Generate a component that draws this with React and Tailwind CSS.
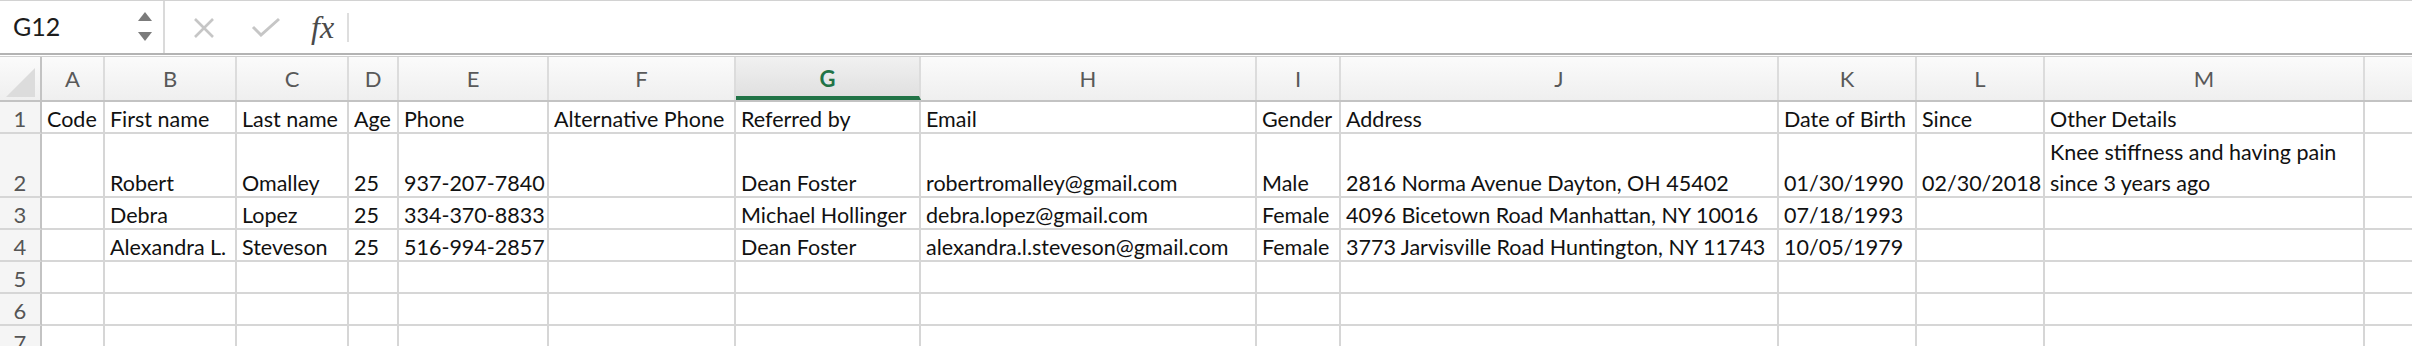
import React from "react";

const cols = [
  { k: "A", w: "w-[63px]" },
  { k: "B", w: "w-[132px]" },
  { k: "C", w: "w-[112px]" },
  { k: "D", w: "w-[50px]" },
  { k: "E", w: "w-[150px]" },
  { k: "F", w: "w-[187px]" },
  { k: "G", w: "w-[185px]" },
  { k: "H", w: "w-[336px]" },
  { k: "I", w: "w-[84px]" },
  { k: "J", w: "w-[438px]" },
  { k: "K", w: "w-[138px]" },
  { k: "L", w: "w-[128px]" },
  { k: "M", w: "w-[320px]" },
];

const rows = [
  { n: 1, h: "h-[32px]", cells: ["Code", "First name", "Last name", "Age", "Phone", "Alternative Phone", "Referred by", "Email", "Gender", "Address", "Date of Birth", "Since", "Other Details"] },
  { n: 2, h: "h-[64px]", cells: ["", "Robert", "Omalley", "25", "937-207-7840", "", "Dean Foster", "robertromalley@gmail.com", "Male", "2816 Norma Avenue Dayton, OH 45402", "01/30/1990", "02/30/2018", ["Knee stiffness and having pain", "since 3 years ago"]] },
  { n: 3, h: "h-[32px]", cells: ["", "Debra", "Lopez", "25", "334-370-8833", "", "Michael Hollinger", "debra.lopez@gmail.com", "Female", "4096 Bicetown Road Manhattan, NY 10016", "07/18/1993", "", ""] },
  { n: 4, h: "h-[32px]", cells: ["", "Alexandra L.", "Steveson", "25", "516-994-2857", "", "Dean Foster", "alexandra.l.steveson@gmail.com", "Female", "3773 Jarvisville Road Huntington, NY 11743", "10/05/1979", "", ""] },
  { n: 5, h: "h-[32px]", cells: [] },
  { n: 6, h: "h-[32px]", cells: [] },
  { n: 7, h: "h-[32px]", cells: [] },
];

function FormulaBar() {
  return (
    <div className="flex h-[53px] border-t border-[#d2d2d2] bg-white">
      <div className="flex w-[165px] shrink-0 items-center justify-between border-r-2 border-[#dadada] pl-[13px] pr-[10px]">
        <span className="text-[25px] text-[#1c1c1c]">G12</span>
        <svg width="16" height="32" viewBox="0 0 16 32">
          <polygon points="8,1 15,10 1,10" fill="#7b7b7b" />
          <polygon points="1,21 15,21 8,30" fill="#7b7b7b" />
        </svg>
      </div>
      <div className="flex items-center pl-[28px]">
        <svg width="22" height="20" viewBox="0 0 22 20" className="mt-[2px]">
          <path d="M2 1 L20 19 M20 1 L2 19" stroke="#c6c6c6" strokeWidth="2.6" fill="none" />
        </svg>
        <svg width="30" height="20" viewBox="0 0 30 20" className="ml-[36px]">
          <path d="M2 10 L10 18 L28 2" stroke="#c6c6c6" strokeWidth="3" fill="none" />
        </svg>
        <span className="ml-[30px] text-[32px] italic text-[#4a4a4a] leading-none" style={{ fontFamily: '"Liberation Serif", "DejaVu Serif", serif' }}>
          fx
        </span>
        <div className="ml-[13px] h-[29px] w-[2px] bg-[#dedede]" />
      </div>
    </div>
  );
}

function HeaderRow() {
  return (
    <div className="flex h-[45px] border-b-2 border-[#c3c3c3] bg-linear-to-b from-[#fbfbfb] to-[#efefef]">
      <div className="relative w-[42px] shrink-0 border-r-2 border-[#c3c3c3]">
        <svg width="40" height="43" viewBox="0 0 40 43" className="absolute left-0 top-0">
          <polygon points="35,11 35,40 6,40" fill="#dcdcdc" />
        </svg>
      </div>
      {cols.map((c) =>
        c.k === "G" ? (
          <div
            key={c.k}
            className={`${c.w} shrink-0 flex items-center justify-center border-r-2 border-b-4 border-r-[#dcdcdc] border-b-[#217346] bg-linear-to-b from-[#f1f1f1] to-[#e0e0e0] text-[22px] font-bold text-[#217346]`}
          >
            <span className="mt-[4px]">{c.k}</span>
          </div>
        ) : (
          <div
            key={c.k}
            className={`${c.w} shrink-0 flex items-center justify-center border-r-2 border-[#dcdcdc] text-[22px] text-[#595959]`}
          >
            {c.k}
          </div>
        )
      )}
      <div className="flex-1" />
    </div>
  );
}

function BodyRow({ row }) {
  return (
    <div className={`flex ${row.h} shrink-0`}>
      <div className="flex w-[42px] shrink-0 items-end justify-center border-r-2 border-b-2 border-r-[#c3c3c3] border-b-[#d6d6d6] bg-[#f5f5f5] text-[22px] leading-[26px] text-[#555555]">
        {row.n}
      </div>
      {cols.map((c, i) => {
        const v = row.cells[i];
        return (
          <div
            key={c.k}
            className={`${c.w} shrink-0 flex flex-col justify-end overflow-hidden whitespace-nowrap border-r-2 border-b-2 border-[#d6d6d6] pl-[5px] text-[21.5px] leading-[26px] text-[#111111]`}
          >
            {Array.isArray(v) ? (
              <>
                <div className="mb-[5px]">{v[0]}</div>
                <div>{v[1]}</div>
              </>
            ) : (
              <div>{v || ""}</div>
            )}
          </div>
        );
      })}
      <div className="flex-1 border-b-2 border-[#d6d6d6]" />
    </div>
  );
}

export default function App() {
  return (
    <div className="h-[346px] w-[2412px] overflow-hidden bg-white" style={{ fontFamily: 'Lato, "Noto Sans", sans-serif' }}>
      <FormulaBar />
      <div className="h-[2px] bg-[#b3b3b3]" />
      <div className="h-[1px] bg-white" />
      <div className="h-[1px] bg-[#d0d0d0]" />
      <HeaderRow />
      {rows.map((r) => (
        <BodyRow key={r.n} row={r} />
      ))}
    </div>
  );
}
